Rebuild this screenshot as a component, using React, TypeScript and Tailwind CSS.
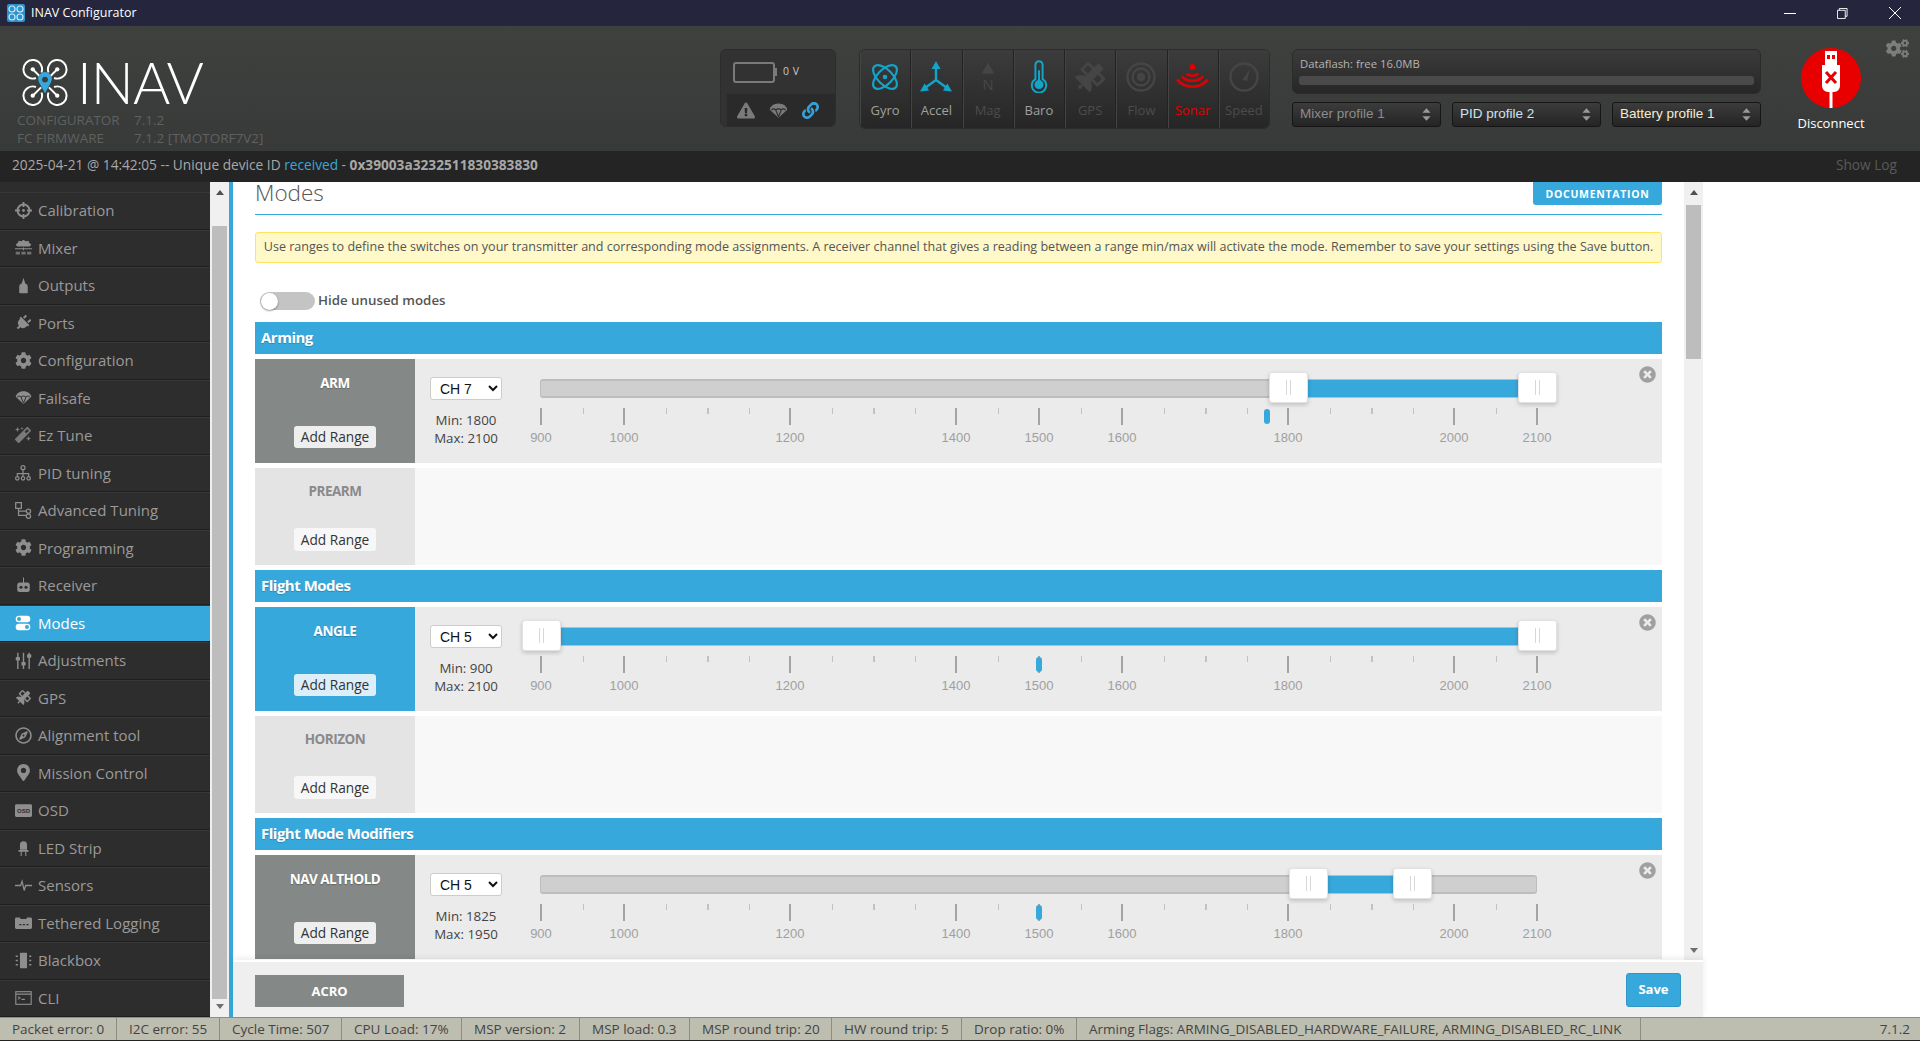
import React from "react";
import { FaCog, FaCogs, FaMagic, FaMapMarkerAlt, FaPlug, FaRegCompass, FaSatellite, FaLink, FaExclamationTriangle, FaTimesCircle } from "react-icons/fa";

const tickMajor = [900, 1000, 1200, 1400, 1500, 1600, 1800, 2000, 2100];
const tickMinor = [950, 1050, 1100, 1150, 1250, 1300, 1350, 1450, 1550, 1650, 1700, 1750, 1850, 1900, 1950, 2050];
// slider scale: 900 sits 126px into the range area, 0.83px per unit
const toX = (v: number) => 126 + (v - 900) * 0.83;

function Parachute({ className = "" }: { className?: string }) {
  return (
    <svg viewBox="0 0 24 24" className={className} fill="currentColor">
      <path d="M12 3C6 3 1.5 6.5 1 11l11 10 11-10C22.500 6.500 18 3 12 3z" />
      <path d="M3 11.500c2-2 4-2 5.500 0M8.500 11.500c1.500-2 5.500-2 7 0M15.500 11.500c1.500-2 3.500-2 5.500 0M8.500 11.500L12 20M15.500 11.500L12 20" fill="none" stroke="#2d2d2d" strokeWidth="1.400" />
    </svg>
  );
}

const icons: Record<string, React.ReactNode> = {
  Calibration: (
    <svg viewBox="0 0 24 24" className="w-[17px] h-[17px]" fill="none" stroke="currentColor" strokeWidth="2.600">
      <circle cx="12" cy="12" r="8.500" />
      <path d="M12 0v7M12 17v7M0 12h7M17 12h7" />
      <circle cx="12" cy="12" r="2" fill="currentColor" stroke="none" />
    </svg>
  ),
  Mixer: (
    <svg viewBox="0 0 24 24" className="w-[17px] h-[17px]" fill="currentColor">
      <path d="M12 1l3 2 4-.500 1 3 3 2-2 3H3L1 7.500l3-2 1-3 4 .500z" />
      <path d="M0 13h24v1.500H0zM11.300 12h1.400v4h-1.400z" />
      <path d="M1 18h6v4H1zM9 18h6v4H9zM17 18h6v4h-6z" fillOpacity="0.7" />
    </svg>
  ),
  Outputs: (
    <svg viewBox="0 0 24 24" className="w-[17px] h-[17px]" fill="currentColor">
      <path d="M12 1l2.500 8c2.500 1 3.500 2.500 3.500 5v8a1 1 0 0 1-1 1H7a1 1 0 0 1-1-1v-8c0-2.500 1-4 3.500-5z" />
    </svg>
  ),
  Ports: <FaPlug className="w-[16px] h-[16px] rotate-45" />,
  Configuration: <FaCog className="w-[17px] h-[17px]" />,
  Failsafe: <Parachute className="w-[17px] h-[17px]" />,
  "Ez Tune": <FaMagic className="w-[16px] h-[16px] opacity-80" />,
  "PID tuning": (
    <svg viewBox="0 0 24 24" className="w-[16px] h-[16px]" fill="none" stroke="currentColor" strokeWidth="1.800">
      <circle cx="12" cy="4" r="3" />
      <circle cx="3.500" cy="20" r="2.600" />
      <circle cx="12" cy="20" r="2.600" />
      <circle cx="20.500" cy="20" r="2.600" />
      <path d="M12 7v10M3.500 17v-4h17v4" />
    </svg>
  ),
  "Advanced Tuning": (
    <svg viewBox="0 0 24 24" className="w-[17px] h-[17px]" fill="none" stroke="currentColor" strokeWidth="1.800">
      <path d="M1 1h8v8H1zM5 9v10h11M5 13h11" />
      <circle cx="19" cy="13" r="3" />
      <circle cx="19" cy="20" r="3" />
    </svg>
  ),
  Programming: <FaCog className="w-[17px] h-[17px]" />,
  Receiver: (
    <svg viewBox="0 0 24 24" className="w-[15px] h-[16px]" fill="currentColor">
      <path d="M11.200 0h1.600v9h-1.600z" />
      <rect x="2" y="8" width="20" height="15" rx="4" />
      <circle cx="8" cy="15.500" r="2.500" fill="#2d2d2d" />
      <circle cx="16" cy="15.500" r="2.500" fill="#2d2d2d" />
    </svg>
  ),
  Modes: (
    <svg viewBox="0 0 24 24" className="w-[16px] h-[16px]">
      <rect x="1" y="1" width="22" height="10" rx="5" fill="#fff" />
      <circle cx="6" cy="6" r="3" fill="#37a8db" />
      <rect x="1" y="13" width="22" height="10" rx="5" fill="#fff" />
      <circle cx="18" cy="18" r="3" fill="#37a8db" />
    </svg>
  ),
  Adjustments: (
    <svg viewBox="0 0 24 24" className="w-[17px] h-[17px]" fill="currentColor">
      <path d="M3 1h2v23H3zM11 1h2v23h-2zM19 1h2v23h-2z" />
      <rect x="1" y="7" width="6" height="5" rx="1" />
      <rect x="9" y="14" width="6" height="5" rx="1" />
      <rect x="17" y="3" width="6" height="5" rx="1" />
    </svg>
  ),
  GPS: <FaSatellite className="w-[15px] h-[15px]" />,
  "Alignment tool": <FaRegCompass className="w-[17px] h-[17px]" />,
  "Mission Control": <FaMapMarkerAlt className="w-[17px] h-[17px]" />,
  OSD: (
    <svg viewBox="0 0 24 18" className="w-[17px] h-[13px]">
      <rect width="24" height="18" rx="2" fill="currentColor" />
      <text x="12" y="12.500" textAnchor="middle" fontSize="8.500" fontWeight="700" fontFamily="Liberation Sans" fill="#2d2d2d">OSD</text>
    </svg>
  ),
  "LED Strip": (
    <svg viewBox="0 0 24 24" className="w-[17px] h-[17px]" fill="currentColor">
      <path d="M7 15V8a5 5 0 0 1 10 0v7zM5 15.500h14V18H5zM8 18h1.500v6H8zM14.500 18H16v6h-1.500z" />
    </svg>
  ),
  Sensors: (
    <svg viewBox="0 0 24 24" className="w-[17px] h-[17px]" fill="none" stroke="currentColor" strokeWidth="1.800">
      <path d="M0 12h8l2-6 3 13 2-7h9" />
    </svg>
  ),
  "Tethered Logging": (
    <svg viewBox="0 0 24 18" className="w-[17px] h-[13px]" fill="currentColor">
      <path d="M2 2h5l1 2h8l1-2h5a2 2 0 0 1 2 2v12a2 2 0 0 1-2 2H2a2 2 0 0 1-2-2V4a2 2 0 0 1 2-2z" />
      <path d="M6 11h3v2H6zM11 11h3v2h-3zM16 11h3v2h-3z" fill="#2d2d2d" />
    </svg>
  ),
  Blackbox: (
    <svg viewBox="0 0 24 24" className="w-[17px] h-[17px]" fill="currentColor">
      <rect x="7" y="1" width="10" height="22" rx="1" />
      <path d="M1 5h3v2H1zM1 11h3v2H1zM1 17h3v2H1zM20 5h3v2h-3zM20 11h3v2h-3zM20 17h3v2h-3z" />
    </svg>
  ),
  CLI: (
    <svg viewBox="0 0 24 20" className="w-[17px] h-[14px]" fill="none" stroke="currentColor" strokeWidth="1.600">
      <rect x="1" y="1" width="22" height="18" />
      <path d="M1 4.500h22M4 8l3 2-3 2M9 12h5" />
    </svg>
  ),
};

const menu = ["Calibration", "Mixer", "Outputs", "Ports", "Configuration", "Failsafe", "Ez Tune", "PID tuning", "Advanced Tuning", "Programming", "Receiver", "Modes", "Adjustments", "GPS", "Alignment tool", "Mission Control", "OSD", "LED Strip", "Sensors", "Tethered Logging", "Blackbox", "CLI"];

const sensorIcons: Record<string, React.ReactNode> = {
  Gyro: (
    <svg viewBox="0 0 30 30" className="w-[30px] h-[30px]" fill="none" stroke="#12a5c9" strokeWidth="2.200">
      <ellipse cx="15" cy="15" rx="7.500" ry="15" transform="rotate(-45 15 15)" />
      <ellipse cx="15" cy="15" rx="7.500" ry="15" transform="rotate(45 15 15)" />
      <circle cx="15" cy="15" r="2.300" fill="#12a5c9" stroke="none" />
    </svg>
  ),
  Accel: (
    <svg viewBox="0 0 32 32" className="w-[32px] h-[32px]" fill="#12a5c9" stroke="#12a5c9">
      <path d="M16 19V6M16 19L5 27M16 19l11 8" fill="none" strokeWidth="2.400" />
      <path d="M16 0l4.500 8h-9zM0 30.500l9-1-4.300-7zM32 30.500l-9-1 4.300-7z" stroke="none" />
    </svg>
  ),
  Mag: (
    <svg viewBox="0 0 20 36" className="w-[16px] h-[32px]" fill="#454545">
      <path d="M10 0l8 14H2z" />
      <text x="10" y="34" textAnchor="middle" fontSize="19" fontFamily="Liberation Sans">N</text>
    </svg>
  ),
  Baro: (
    <svg viewBox="0 0 20 36" className="w-[18px] h-[33px]" fill="none" stroke="#12a5c9" strokeWidth="2.200">
      <path d="M6 21V5a4 4 0 0 1 8 0v16a8 8 0 1 1-8 0z" />
      <circle cx="10" cy="27" r="5" fill="#12a5c9" stroke="none" />
      <path d="M10 11v14" />
    </svg>
  ),
  GPS: <FaSatellite className="w-[30px] h-[30px] text-[#454545]" />,
  Flow: (
    <svg viewBox="0 0 30 30" className="w-[30px] h-[30px]" fill="none" stroke="#454545" strokeWidth="2.400">
      <circle cx="15" cy="15" r="13.500" />
      <circle cx="15" cy="15" r="8.500" />
      <circle cx="15" cy="15" r="3" fill="#454545" />
    </svg>
  ),
  Sonar: (
    <svg viewBox="0 0 34 30" className="w-[33px] h-[29px]" fill="none" stroke="#e00000" strokeWidth="2.600">
      <circle cx="17" cy="5" r="3" fill="#e00000" stroke="none" />
      <path d="M11 12c3 3 9 3 12 0M6 15c6 6 16 6 22 0M1 18c8 10 24 10 32 0" />
    </svg>
  ),
  Speed: (
    <svg viewBox="0 0 30 30" className="w-[30px] h-[30px]" fill="none" stroke="#454545" strokeWidth="2.400">
      <circle cx="15" cy="15" r="13.500" />
      <path d="M13 18l8-11-3 12z" fill="#454545" stroke="none" />
    </svg>
  ),
};

const sensors = [
  { name: "Gyro", text: "text-[#a0a0a0]" },
  { name: "Accel", text: "text-[#a0a0a0]" },
  { name: "Mag", text: "text-[#4c4c4c]" },
  { name: "Baro", text: "text-[#a0a0a0]" },
  { name: "GPS", text: "text-[#4c4c4c]" },
  { name: "Flow", text: "text-[#4c4c4c]" },
  { name: "Sonar", text: "text-[#e00000]" },
  { name: "Speed", text: "text-[#4c4c4c]" },
];

const statusItems = [
  { text: "Packet error: 0", w: "w-[117px]" },
  { text: "I2C error: 55", w: "w-[103px]" },
  { text: "Cycle Time: 507", w: "w-[122px]" },
  { text: "CPU Load: 17%", w: "w-[120px]" },
  { text: "MSP version: 2", w: "w-[118px]" },
  { text: "MSP load: 0.3", w: "w-[110px]" },
  { text: "MSP round trip: 20", w: "w-[142px]" },
  { text: "HW round trip: 5", w: "w-[130px]" },
  { text: "Drop ratio: 0%", w: "w-[115px]" },
  { text: "Arming Flags: ARMING_DISABLED_HARDWARE_FAILURE, ARMING_DISABLED_RC_LINK", w: "w-[564px]" },
];

function ProfileSelect({ label, color }: { label: string; color: string }) {
  return (
    <div className="w-[149px] h-[25px] flex items-center justify-between pl-[7px] pr-[9px] rounded-[3px] border border-[#151515] bg-[linear-gradient(#3c3c3c,#242424)]">
      <span className={`text-[13.500px] font-['Liberation_Sans',sans-serif] ${color}`}>{label}</span>
      <svg viewBox="0 0 10 14" className="w-[9px] h-[13px]" fill="#9a9a9a">
        <path d="M5 0l4.500 5h-9zM5 14l4.500-5h-9z" />
      </svg>
    </div>
  );
}

function LogoRing({ transform }: { transform?: string }) {
  return (
    <g transform={transform}>
      <path d="M13.750 19.430A9.500 9.500 0 1 1 19.430 13.750" strokeWidth="2" />
      <path d="M10.500 10.500L19 19" strokeWidth="2" />
      <circle cx="10.500" cy="10.500" r="2.200" fill="#fff" stroke="none" />
    </g>
  );
}

function Handle({ value }: { value: number }) {
  return (
    <div className="absolute top-[13px] w-[39px] h-[31px] -ml-[19.500px] flex items-center justify-center gap-[3px] bg-white border border-[#e2e2e2] rounded-[3px] shadow-[0_2px_4px_rgba(0,0,0,0.18)] z-10" style={{ left: toX(value) }}>
      <span className="w-px h-[15px] bg-[#d8d8d8]" />
      <span className="w-px h-[15px] bg-[#d8d8d8]" />
    </div>
  );
}

function RangeRow({ name, active, channel, min, max, marker }: { name: string; active?: boolean; channel: string; min: number; max: number; marker: number }) {
  return (
    <div className="mt-[5px] flex h-[104px] bg-[#ebebeb] shrink-0">
      <div className={`w-[160px] shrink-0 flex flex-col items-center ${active ? "bg-[#37a8db]" : "bg-[#848987]"}`}>
        <div className="mt-[14px] h-[20px] leading-[20px] text-[13.500px] font-bold tracking-[-0.5px] text-white [text-shadow:0_1px_1px_rgba(0,0,0,0.25)]">{name}</div>
        <button className={`mt-[33px] w-[82px] h-[22px] rounded-[3px] text-[13.700px] leading-[22px] text-[#333] ${active ? "bg-[#dceef8]" : "bg-[#eeeeee]"}`}>Add Range</button>
      </div>
      <div className="relative flex-1">
        <select defaultValue={channel} className="absolute left-[15px] top-[18px] w-[72px] h-[23px] bg-white border border-[#ccc] rounded-[3px] pl-[5px] text-[14px] text-[#111] font-['Liberation_Sans',sans-serif]">
          <option>{channel}</option>
        </select>
        <div className="absolute left-[15px] top-[52px] w-[72px] text-center text-[13.300px] leading-[18px] text-[#444] whitespace-nowrap">
          <div>Min: {min}</div>
          <div>Max: {max}</div>
        </div>
        <div className="absolute left-[125px] top-[20px] w-[997px] h-[19px] rounded-[3px] bg-[#cfcfcf] border-y-2 border-x border-[#bdbdbd]" />
        <div className="absolute top-[20px] h-[19px] bg-[#37a8db] border-y border-[#bdbdbd]" style={{ left: toX(min), width: toX(max) - toX(min) }} />
        <Handle value={min} />
        <Handle value={max} />
        {tickMajor.map((v) => (
          <React.Fragment key={v}>
            <div className="absolute top-[49px] w-[2px] -ml-px h-[17px] bg-[#a3a3a3]" style={{ left: toX(v) }} />
            <div className="absolute top-[71px] w-[40px] -ml-[20px] text-center text-[13px] leading-[16px] text-[#a0a0a0] font-['Liberation_Sans',sans-serif]" style={{ left: toX(v) }}>{v}</div>
          </React.Fragment>
        ))}
        {tickMinor.map((v) => (
          <div key={v} className="absolute top-[49px] w-[1.500px] h-[6px] bg-[#c2c2c2]" style={{ left: toX(v) }} />
        ))}
        <div className="absolute top-[50px] h-[15px] w-[6px] -ml-[3px] rounded-full bg-[#37a8db]" style={{ left: toX(marker) }} />
        <FaTimesCircle className="absolute left-[1224px] top-[7px] w-[17px] h-[17px] text-[#a0a0a0]" />
      </div>
    </div>
  );
}

function EmptyRow({ name }: { name: string }) {
  return (
    <div className="mt-[5px] flex h-[97px] bg-[#f8f8f8] shrink-0">
      <div className="w-[160px] flex flex-col items-center bg-[#e4e4e4]">
        <div className="mt-[13px] h-[20px] leading-[20px] text-[13.500px] font-bold tracking-[-0.5px] text-[#8a8a8a]">{name}</div>
        <button className="mt-[27px] w-[82px] h-[23px] rounded-[3px] bg-[#f7f7f7] text-[13.700px] leading-[22px] text-[#333]">Add Range</button>
      </div>
    </div>
  );
}

function SectionBar({ title }: { title: string }) {
  return (
    <div className="mt-[5px] h-[32px] shrink-0 pl-[6px] bg-[#37a8db] text-white text-[15px] font-bold tracking-[-0.5px] leading-[31px] [text-shadow:0_1px_1px_rgba(0,0,0,0.2)]">{title}</div>
  );
}

function ScrollTrack({ thumbTop, thumbBottom, thumbClass }: { thumbTop: string; thumbBottom: string; thumbClass: string }) {
  return (
    <div className="w-[19px] shrink-0 bg-[#f0f0f0] flex flex-col items-center">
      <svg viewBox="0 0 10 6" className={`w-[8px] h-[5px] shrink-0 ${thumbTop}`} fill="#505050"><path d="M5 0l5 6H0z" /></svg>
      <div className={`w-[15px] bg-[#bdbdbd] shrink-0 ${thumbClass}`} />
      <svg viewBox="0 0 10 6" className={`w-[8px] h-[5px] shrink-0 mt-auto ${thumbBottom}`} fill="#6e6e6e"><path d="M5 6L10 0H0z" /></svg>
    </div>
  );
}

export default function App() {
  return (
    <div className="w-[1920px] h-[1041px] overflow-hidden flex flex-col bg-white font-['Open_Sans',sans-serif]">
      {/* title bar */}
      <div className="h-[26px] shrink-0 bg-[#25263d] flex items-center text-white">
        <svg viewBox="0 0 18 18" className="ml-[7px] w-[18px] h-[18px] rounded-[2px]">
          <rect width="18" height="18" fill="#2c93cf" />
          <g fill="none" stroke="#cfe9f7" strokeWidth="1.200">
            <circle cx="5" cy="5" r="3" />
            <circle cx="13" cy="5" r="3" />
            <circle cx="5" cy="13" r="3" />
            <circle cx="13" cy="13" r="3" />
          </g>
        </svg>
        <span className="ml-[6px] text-[12.500px]">INAV Configurator</span>
        <svg viewBox="0 0 12 12" className="ml-auto w-[12px] h-[12px]" stroke="#fff" fill="none"><path d="M0 6.500h12" /></svg>
        <svg viewBox="0 0 12 12" className="ml-[41px] w-[11px] h-[11px]" stroke="#fff" fill="none"><path d="M.5 2.500h8.500v9H.5zM2.500 2.500V.5H11v8.500H9" /></svg>
        <svg viewBox="0 0 12 12" className="ml-[41px] mr-[19px] w-[12px] h-[12px]" stroke="#fff" fill="none"><path d="M0 0l12 12M12 0L0 12" /></svg>
      </div>

      {/* header */}
      <div className="relative h-[125px] shrink-0 flex bg-[linear-gradient(#3f413f,#383a39)]">
        <div className="w-[720px] shrink-0 pl-[17px] pt-[33px]">
          <div className="flex items-center ml-[5px] h-[47px]">
            <svg viewBox="0 0 46 48" className="w-[46px] h-[47px]" fill="none" stroke="#fff">
              <LogoRing />
              <LogoRing transform="translate(46 0) scale(-1 1)" />
              <LogoRing transform="translate(0 48) scale(1 -1)" />
              <LogoRing transform="translate(46 48) scale(-1 -1)" />
              <path d="M23 35l-6-11a7 7 0 1 1 12 0z" fill="#37a8db" stroke="none" />
              <circle cx="23" cy="21" r="3" fill="#3d3f3e" stroke="none" />
            </svg>
            <span className="ml-[9px] text-[57px] leading-[47px] tracking-[-1px] font-light text-white font-['Lato',sans-serif]">INAV</span>
          </div>
          <div className="mt-[5px] grid grid-cols-[117px_1fr] text-[13.500px] leading-[18px] text-[#5f6160]">
            <span>CONFIGURATOR</span><span>7.1.2</span>
            <span>FC FIRMWARE</span><span>7.1.2 [TMOTORF7V2]</span>
          </div>
        </div>

        <div className="mt-[23px] w-[116px] h-[78px] shrink-0 rounded-[6px] border border-[#2c2c2c] bg-[#323232] overflow-hidden flex flex-col">
          <div className="h-[44px] flex items-center pl-[12px]">
            <div className="w-[42px] h-[21px] rounded-[3px] border-2 border-[#7a7a7a]" />
            <div className="w-[2px] h-[8px] bg-[#7a7a7a]" />
            <span className="ml-[6px] text-[10.500px] tracking-[0.5px] text-[#c8c8c8]">0 V</span>
          </div>
          <div className="flex-1 ml-[6px] bg-[#2a2a2a] flex items-center pl-[10px] gap-[14px]">
            <FaExclamationTriangle className="w-[18px] h-[17px] text-[#7a7a7a]" />
            <Parachute className="w-[19px] h-[19px] text-[#7a7a7a]" />
            <FaLink className="w-[17px] h-[17px] text-[#37a0d5]" />
          </div>
        </div>

        <div className="ml-[23px] mt-[23px] w-[411px] h-[80px] shrink-0 flex rounded-[6px] border border-[#2c2c2c] overflow-hidden">
          {sensors.map((s) => (
            <div key={s.name} className="flex-1 flex flex-col items-center border-r border-[#222] last:border-r-0 shadow-[inset_1px_0_0_#444] bg-[linear-gradient(#3c3c3c,#262626)]">
              <div className="h-[52px] pt-[1px] flex items-center justify-center">{sensorIcons[s.name]}</div>
              <span className={`text-[13px] leading-[16px] ${s.text}`}>{s.name}</span>
            </div>
          ))}
        </div>

        <div className="ml-[22px] mt-[23px] w-[469px] shrink-0">
          <div className="h-[45px] rounded-[6px] border border-[#2b2b2b] bg-[linear-gradient(#3b3b3b,#272727)] px-[6px]">
            <div className="pl-[1px] pt-[6px] h-[26px] text-[11.300px] leading-[16px] text-[#b4b4b4]">Dataflash: free 16.0MB</div>
            <div className="h-[9px] rounded-[3px] bg-[#4a4a4a]" />
          </div>
          <div className="mt-[8px] flex justify-between">
            <ProfileSelect label="Mixer profile 1" color="text-[#8c8c8c]" />
            <ProfileSelect label="PID profile 2" color="text-[#cfe2f2]" />
            <ProfileSelect label="Battery profile 1" color="text-[#f3ecd4]" />
          </div>
        </div>

        <div className="ml-[40px] mt-[22px] w-[60px] flex flex-col items-center">
          <svg viewBox="0 0 60 60" className="w-[60px] h-[60px]">
            <circle cx="30" cy="30" r="30" fill="#e80000" />
            <path d="M24 3h12v14h3v21a6 6 0 0 1-6 6h-1.500v16h-3V44H27a6 6 0 0 1-6-6V17h3z" fill="#fff" />
            <path d="M26 7h3v4h-3zM31 7h3v4h-3z" fill="#e80000" />
            <path d="M25 24l10 11M35 24L25 35" stroke="#e80000" strokeWidth="3" />
          </svg>
          <span className="mt-[6px] text-[13px] leading-[18px] text-white whitespace-nowrap">Disconnect</span>
        </div>

        <FaCogs className="absolute left-[1886px] top-[13px] w-[23px] h-[19px] text-[#7d7d7d]" />
      </div>

      {/* log bar */}
      <div className="h-[31px] shrink-0 bg-[#242424] flex items-center pl-[12px] pr-[23px] pb-[3px] text-[13.700px] text-[#a8a8a8]">
        <span>2025-04-21 @ 14:42:05 -- Unique device ID <span className="text-[#37a8db]">received</span> - <b>0x39003a3232511830383830</b></span>
        <span className="ml-auto text-[#5a5a5a]">Show Log</span>
      </div>

      {/* body */}
      <div className="flex-1 min-h-0 flex">
        <div className="w-[210px] shrink-0 bg-[#2d2d2d] pt-[10px]">
          {menu.map((m) => {
            const on = m === "Modes";
            return (
              <div key={m} className={`h-[37.500px] flex items-center border-b border-[#1f1f1f] shadow-[inset_0_1px_0_#383838] ${on ? "bg-[#37a8db] text-white" : "text-[#9a9a9a]"}`}>
                <span className={`w-[38px] pl-[8px] flex items-center justify-center shrink-0 ${on ? "text-white" : "text-[#8e8e8e]"}`}>{icons[m]}</span>
                <span className="text-[15px]">{m}</span>
              </div>
            );
          })}
        </div>
        <ScrollTrack thumbTop="mt-[8px]" thumbBottom="mb-[8px]" thumbClass="mt-[31px] h-[773px]" />
        <div className="w-[4px] shrink-0 bg-[#37a8db]" />

        <div className="w-[1470px] shrink-0 flex flex-col">
          <div className="relative flex-1 min-h-0 flex overflow-hidden">
            <div className="w-[1451px] shrink-0 pl-[22px] pr-[22px] flex flex-col">
              <div className="h-[33px] shrink-0 flex items-start justify-between border-b border-[#37a8db]">
                <span className="text-[22.500px] leading-[22px] font-light text-[#555]">Modes</span>
                <button className="w-[129px] h-[23px] rounded-b-[3px] bg-[#37a8db] text-white text-[10.500px] font-bold tracking-[0.7px] leading-[20px]">DOCUMENTATION</button>
              </div>
              <div className="mt-[17px] h-[31px] shrink-0 rounded-[3px] border border-[#ffe55f] bg-[#fff8c8] text-[12.560px] leading-[28px] text-[#555] text-center whitespace-nowrap">
                Use ranges to define the switches on your transmitter and corresponding mode assignments. A receiver channel that gives a reading between a range min/max will activate the mode. Remember to save your settings using the Save button.
              </div>
              <div className="mt-[29px] h-[18px] shrink-0 flex items-center pl-[5px]">
                <div className="w-[55px] h-[18px] rounded-full bg-[#c4c4c4] flex items-center">
                  <div className="ml-[1px] w-[17px] h-[17px] rounded-full bg-white shadow-[0_1px_2px_rgba(0,0,0,0.4)]" />
                </div>
                <span className="ml-[3px] text-[13.300px] font-semibold text-[#555]">Hide unused modes</span>
              </div>
              <div className="mt-[7px]" />
              <SectionBar title="Arming" />
              <RangeRow name="ARM" channel="CH 7" min={1800} max={2100} marker={1775} />
              <EmptyRow name="PREARM" />
              <SectionBar title="Flight Modes" />
              <RangeRow name="ANGLE" active channel="CH 5" min={900} max={2100} marker={1500} />
              <EmptyRow name="HORIZON" />
              <SectionBar title="Flight Mode Modifiers" />
              <RangeRow name="NAV ALTHOLD" channel="CH 5" min={1825} max={1950} marker={1500} />
            </div>
            <ScrollTrack thumbTop="mt-[8px]" thumbBottom="mb-[7px]" thumbClass="mt-[10px] h-[154px]" />
          </div>
          <div className="h-[57px] shrink-0 border-t-2 border-white bg-[#efefef] shadow-[0_-2px_6px_rgba(0,0,0,0.08)] z-10 flex items-start pl-[22px]">
            <div className="mt-[13px] w-[149px] h-[32px] bg-[#848987] text-white text-[13px] font-bold leading-[32px] text-center">ACRO</div>
            <button className="ml-auto mr-[22px] mt-[11px] w-[55px] h-[34px] rounded-[3px] bg-[#37a8db] border border-[#2f97c7] text-white text-[13px] font-bold">Save</button>
          </div>
        </div>
        <div className="flex-1 bg-white" />
      </div>

      {/* status bar */}
      <div className="h-[24px] shrink-0 border-t border-[#8d8d82] border-b border-b-[#222] bg-[#bdbdb0] flex items-center text-[13.500px] text-[#444]">
        {statusItems.map((s) => (
          <div key={s.text} className={`${s.w} h-full shrink-0 flex items-center pl-[12px] border-r border-[#8d8d82] whitespace-nowrap`}>{s.text}</div>
        ))}
        <span className="ml-auto mr-[10px]">7.1.2</span>
      </div>
    </div>
  );
}
